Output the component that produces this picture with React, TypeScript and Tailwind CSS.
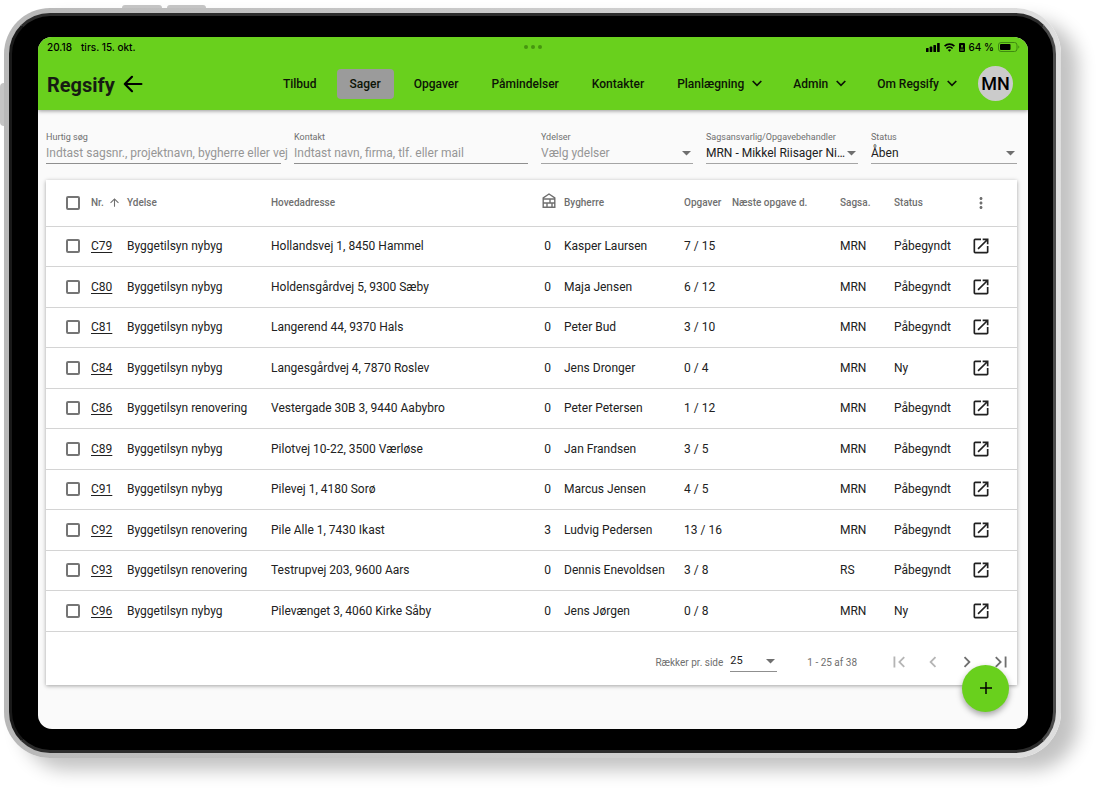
import React, { useState } from "react";
import {
  MdArrowUpward,
  MdChevronLeft,
  MdChevronRight,
  MdFirstPage,
  MdLastPage,
  MdMoreVert,
  MdOpenInNew,
} from "react-icons/md";

type Case = {
  nr: string;
  service: string;
  address: string;
  buildings: number;
  client: string;
  tasks: string;
  owner: string;
  status: string;
};

const cases: Case[] = [
  { nr: "C79", service: "Byggetilsyn nybyg", address: "Hollandsvej 1, 8450 Hammel", buildings: 0, client: "Kasper Laursen", tasks: "7 / 15", owner: "MRN", status: "Påbegyndt" },
  { nr: "C80", service: "Byggetilsyn nybyg", address: "Holdensgårdvej 5, 9300 Sæby", buildings: 0, client: "Maja Jensen", tasks: "6 / 12", owner: "MRN", status: "Påbegyndt" },
  { nr: "C81", service: "Byggetilsyn nybyg", address: "Langerend 44, 9370 Hals", buildings: 0, client: "Peter Bud", tasks: "3 / 10", owner: "MRN", status: "Påbegyndt" },
  { nr: "C84", service: "Byggetilsyn nybyg", address: "Langesgårdvej 4, 7870 Roslev", buildings: 0, client: "Jens Dronger", tasks: "0 / 4", owner: "MRN", status: "Ny" },
  { nr: "C86", service: "Byggetilsyn renovering", address: "Vestergade 30B 3, 9440 Aabybro", buildings: 0, client: "Peter Petersen", tasks: "1 / 12", owner: "MRN", status: "Påbegyndt" },
  { nr: "C89", service: "Byggetilsyn nybyg", address: "Pilotvej 10-22, 3500 Værløse", buildings: 0, client: "Jan Frandsen", tasks: "3 / 5", owner: "MRN", status: "Påbegyndt" },
  { nr: "C91", service: "Byggetilsyn nybyg", address: "Pilevej 1, 4180 Sorø", buildings: 0, client: "Marcus Jensen", tasks: "4 / 5", owner: "MRN", status: "Påbegyndt" },
  { nr: "C92", service: "Byggetilsyn renovering", address: "Pile Alle 1, 7430 Ikast", buildings: 3, client: "Ludvig Pedersen", tasks: "13 / 16", owner: "MRN", status: "Påbegyndt" },
  { nr: "C93", service: "Byggetilsyn renovering", address: "Testrupvej 203, 9600 Aars", buildings: 0, client: "Dennis Enevoldsen", tasks: "3 / 8", owner: "RS", status: "Påbegyndt" },
  { nr: "C96", service: "Byggetilsyn nybyg", address: "Pilevænget 3, 4060 Kirke Såby", buildings: 0, client: "Jens Jørgen", tasks: "0 / 8", owner: "MRN", status: "Ny" },
];

const navItems = [
  { label: "Tilbud" },
  { label: "Sager", active: true },
  { label: "Opgaver" },
  { label: "Påmindelser" },
  { label: "Kontakter" },
  { label: "Planlægning", menu: true },
  { label: "Admin", menu: true },
  { label: "Om Regsify", menu: true },
];

const StatusBar = () => (
  <div className="relative flex h-5 items-center justify-between pr-2 pl-[9px] font-['Inter',sans-serif] text-[10px] font-medium">
    <div className="flex gap-[9px]">
      <span>20.18</span>
      <span>tirs. 15. okt.</span>
    </div>
    <div className="absolute top-2 left-1/2 flex -translate-x-1/2 gap-[3px]">
      <i className="size-1 rounded-full bg-[#46960f]" />
      <i className="size-1 rounded-full bg-[#46960f]" />
      <i className="size-1 rounded-full bg-[#46960f]" />
    </div>
    <div className="flex items-center gap-1">
      <svg width="14" height="9" viewBox="0 0 14 9">
        <rect x="0" y="5" width="2.6" height="4" rx="0.6" />
        <rect x="3.7" y="3.6" width="2.6" height="5.4" rx="0.6" />
        <rect x="7.4" y="1.9" width="2.6" height="7.1" rx="0.6" />
        <rect x="11.1" y="0" width="2.6" height="9" rx="0.6" />
      </svg>
      <svg width="11" height="9" viewBox="0 0 11 9" fill="none" stroke="currentColor" strokeWidth="1.7">
        <path d="M0.6 3.2a7 7 0 0 1 9.8 0" />
        <path d="M2.4 5.5a4.4 4.4 0 0 1 6.2 0" />
        <path d="M5.5 8.8 3.8 7.1a2.4 2.4 0 0 1 3.4 0Z" fill="currentColor" stroke="none" />
      </svg>
      <svg width="6" height="9" viewBox="0 0 6 9">
        <rect width="6" height="9" rx="1" />
        <circle cx="3" cy="2.9" r="1" fill="#69d01d" />
        <path d="M1.3 5.3q1.7-1.4 3.4 0ZM1.3 6.4h3.4v1H1.3Z" fill="#69d01d" />
      </svg>
      <span>64 %</span>
      <svg width="22" height="10" viewBox="0 0 22 10">
        <rect x="0.5" y="0.5" width="18.5" height="9" rx="2.5" fill="none" stroke="#3f8a10" />
        <rect x="2" y="2" width="10.5" height="6" rx="1" />
        <path d="M20.3 3.5v3q1-.4 1-1.5t-1-1.5Z" fill="#3f8a10" />
      </svg>
    </div>
  </div>
);

const NavBar = () => (
  <div className="flex h-[53px] items-center justify-between pr-[15px] pl-[9px]">
    <div className="flex items-center gap-2">
      <span className="pt-[2px] text-[20px] font-bold text-[#161c12]">Regsify</span>
      <button aria-label="Tilbage">
        <svg width="20" height="18" viewBox="0 0 20 18" fill="none" stroke="#000" strokeWidth="2.2" strokeLinecap="round" strokeLinejoin="round">
          <path d="M18.4 9H1.8M9 1.8 1.8 9 9 16.2" />
        </svg>
      </button>
    </div>
    <div className="flex items-center gap-[10px]">
      <nav className="flex items-center gap-[7px]">
        {navItems.map((item) => (
          <button
            key={item.label}
            className={`${item.active ? "bg-[#9b9b9b]" : ""} ${
              item.menu ? "pr-[11px]" : "pr-[13px]"
            } flex h-[30px] items-center gap-2 rounded pl-[13px] text-[12px] font-medium whitespace-nowrap text-[#0c1406]`}
          >
            {item.label}
            {item.menu && (
              <svg width="10" height="7" viewBox="0 0 10 7" fill="none" stroke="currentColor" strokeWidth="1.7">
                <path d="M0.7 1 5 5.3 9.3 1" />
              </svg>
            )}
          </button>
        ))}
      </nav>
      <button className="size-[35px] rounded-full bg-[#cbcbcb] text-[18px] font-medium">
        MN
      </button>
    </div>
  </div>
);

const TextFilter = ({ id, label, placeholder }: { id: string; label: string; placeholder: string }) => (
  <div className="flex flex-col border-b border-[#8f8f8f]">
    <label htmlFor={id} className="text-[9px] leading-3 text-[#6f6f6f]">
      {label}
    </label>
    <input
      id={id}
      type="text"
      placeholder={placeholder}
      className="-mr-2 h-5 text-[12px] text-[#212121] outline-none placeholder:text-[#969696]"
    />
  </div>
);

const Caret = () => (
  <svg width="9" height="5" viewBox="0 0 9 5" fill="#6f6f6f" className="mr-[2px] shrink-0">
    <path d="M0 0h9L4.5 4.6Z" />
  </svg>
);

const SelectFilter = ({ id, label, value, muted }: { id: string; label: string; value: string; muted?: boolean }) => (
  <div className="flex flex-col border-b border-[#a5a5a5]">
    <label htmlFor={id} className="text-[9px] leading-3 text-[#6f6f6f]">
      {label}
    </label>
    <div className="flex items-center">
      <select
        id={id}
        className={`${
          muted ? "text-[#969696]" : "text-[#212121]"
        } h-5 min-w-0 flex-1 appearance-none truncate text-[12px] outline-none`}
      >
        <option>{value}</option>
      </select>
      <Caret />
    </div>
  </div>
);

const HouseIcon = () => (
  <svg width="14" height="15" viewBox="0 0 14 15" fill="none" stroke="currentColor" strokeWidth="1.4" className="mb-1 ml-auto block">
    <path d="M1.2 14.2V4.8L7 1l5.8 3.8v9.4ZM1 6h12M1 10h12M8 6v4M5 10v4M10 10v4" />
  </svg>
);

const Checkbox = ({ label }: { label: string }) => (
  <input
    type="checkbox"
    aria-label={label}
    className="ml-5 block size-[14px] appearance-none rounded-[2px] border-2 border-[#757575] checked:bg-[#757575]"
  />
);

const CaseTable = () => (
  <table className="w-full table-fixed text-left text-[12px] whitespace-nowrap text-[#212121]">
    <colgroup>
      <col className="w-[45px]" />
      <col className="w-9" />
      <col className="w-36" />
      <col />
      <col className="w-6" />
      <col className="w-[120px]" />
      <col className="w-12" />
      <col className="w-[108px]" />
      <col className="w-[54px]" />
      <col className="w-[79px]" />
      <col className="w-11" />
    </colgroup>
    <thead>
      <tr className="h-[46px] border-b border-[#d4d4d4] text-[10px] text-[#6f6f6f] *:font-medium">
        <th>
          <Checkbox label="Vælg alle" />
        </th>
        <th>
          <span className="flex items-center gap-1">
            Nr. <MdArrowUpward size={13} className="shrink-0" />
          </span>
        </th>
        <th>Ydelse</th>
        <th>Hovedadresse</th>
        <th className="pr-2" aria-label="Bygninger">
          <HouseIcon />
        </th>
        <th>Bygherre</th>
        <th>Opgaver</th>
        <th>Næste opgave d.</th>
        <th>Sagsa.</th>
        <th>Status</th>
        <th>
          <button aria-label="Flere valg" className="-ml-px block">
            <MdMoreVert size={18} />
          </button>
        </th>
      </tr>
    </thead>
    <tbody>
      {cases.map((c) => (
        <tr key={c.nr} className="border-b border-[#d4d4d4] odd:h-10 even:h-[41px]">
          <td>
            <Checkbox label={`Vælg ${c.nr}`} />
          </td>
          <td>
            <a href={`#${c.nr}`} className="underline underline-offset-2">
              {c.nr}
            </a>
          </td>
          <td>{c.service}</td>
          <td>{c.address}</td>
          <td className="pr-[13px] text-right">{c.buildings}</td>
          <td>{c.client}</td>
          <td>{c.tasks}</td>
          <td></td>
          <td>{c.owner}</td>
          <td>{c.status}</td>
          <td>
            <button aria-label={`Åbn ${c.nr}`} className="-ml-[2px] block">
              <MdOpenInNew size={20} />
            </button>
          </td>
        </tr>
      ))}
    </tbody>
  </table>
);

const Pagination = () => {
  const [perPage, setPerPage] = useState<string>("25");

  return (
    <div className="flex h-[53px] items-center justify-end pt-2 pr-[5px] text-[10px] text-[#6f6f6f]">
      <label htmlFor="perPage" className="mr-[7px]">
        Rækker pr. side
      </label>
      <div className="mr-[30px] flex w-[47px] items-center border-b border-[#8f8f8f]">
        <select
          id="perPage"
          value={perPage}
          onChange={(e) => setPerPage(e.target.value)}
          className="h-[18px] min-w-0 flex-1 appearance-none text-[11px] text-[#212121] outline-none"
        >
          <option>10</option>
          <option>25</option>
          <option>50</option>
        </select>
        <Caret />
      </div>
      <span className="mr-[31px]">1 - 25 af 38</span>
      <div className="flex gap-3">
        <button aria-label="Første side" className="text-[#b5b5b5]" disabled>
          <MdFirstPage size={22} />
        </button>
        <button aria-label="Forrige side" className="text-[#b5b5b5]" disabled>
          <MdChevronLeft size={22} />
        </button>
        <button aria-label="Næste side">
          <MdChevronRight size={22} />
        </button>
        <button aria-label="Sidste side">
          <MdLastPage size={22} />
        </button>
      </div>
    </div>
  );
};

const App = () => {
  return (
    <div className="bg-white pt-2 pr-[39px] pb-[30px] pl-1 font-['Roboto',sans-serif]">
      <div className="relative rounded-[46px] bg-linear-to-r from-[#b8b8b8] to-[#dedede] p-[5px] shadow-[17px_12px_18px_rgba(0,0,0,0.24)]">
        {/* hardware buttons */}
        <div className="absolute -top-[3px] left-[118px] h-[3px] w-10 rounded-t bg-[#c4c4c4]" />
        <div className="absolute -top-[3px] left-[163px] h-[3px] w-[39px] rounded-t bg-[#c4c4c4]" />
        <div className="absolute top-[75px] -left-1 h-[43px] w-1 rounded-l bg-[#c4c4c4]" />

        <div className="rounded-[41px] border-[3px] border-y-[#2c2c2c] border-r-[#4c4c4c] border-l-[#1a1a1a] bg-black py-[21px] pr-[25px] pl-[26px]">
          <div className="relative overflow-hidden rounded-[14px] bg-[#fafafa]">
            <header className="relative bg-[#69d01d] shadow-[0_1px_4px_rgba(0,0,0,0.4)]">
              <StatusBar />
              <NavBar />
            </header>

            <main className="pt-[21px] pr-[11px] pb-11 pl-2">
              <form className="mb-4 grid grid-cols-[235fr_234fr_152fr_152fr_146fr] gap-[13px] *:min-w-0">
                <TextFilter id="quick" label="Hurtig søg" placeholder="Indtast sagsnr., projektnavn, bygherre eller vej" />
                <TextFilter id="contact" label="Kontakt" placeholder="Indtast navn, firma, tlf. eller mail" />
                <SelectFilter id="services" label="Ydelser" value="Vælg ydelser" muted />
                <SelectFilter id="owner" label="Sagsansvarlig/Opgavebehandler" value="MRN - Mikkel Riisager Nielsen" />
                <SelectFilter id="status" label="Status" value="Åben" />
              </form>

              <section className="bg-white shadow-[0_1px_4px_rgba(0,0,0,0.35)]">
                <CaseTable />
                <Pagination />
              </section>
            </main>

            <button
              aria-label="Opret sag"
              className="absolute right-[19px] bottom-[17px] flex size-[47px] items-center justify-center rounded-full bg-[#69d01d] shadow-[0_3px_6px_rgba(0,0,0,0.35)]"
            >
              <svg width="12" height="12" viewBox="0 0 12 12" stroke="#000" strokeWidth="1.5">
                <path d="M6 0v12M0 6h12" />
              </svg>
            </button>
          </div>
        </div>
      </div>
    </div>
  );
};

export default App;
